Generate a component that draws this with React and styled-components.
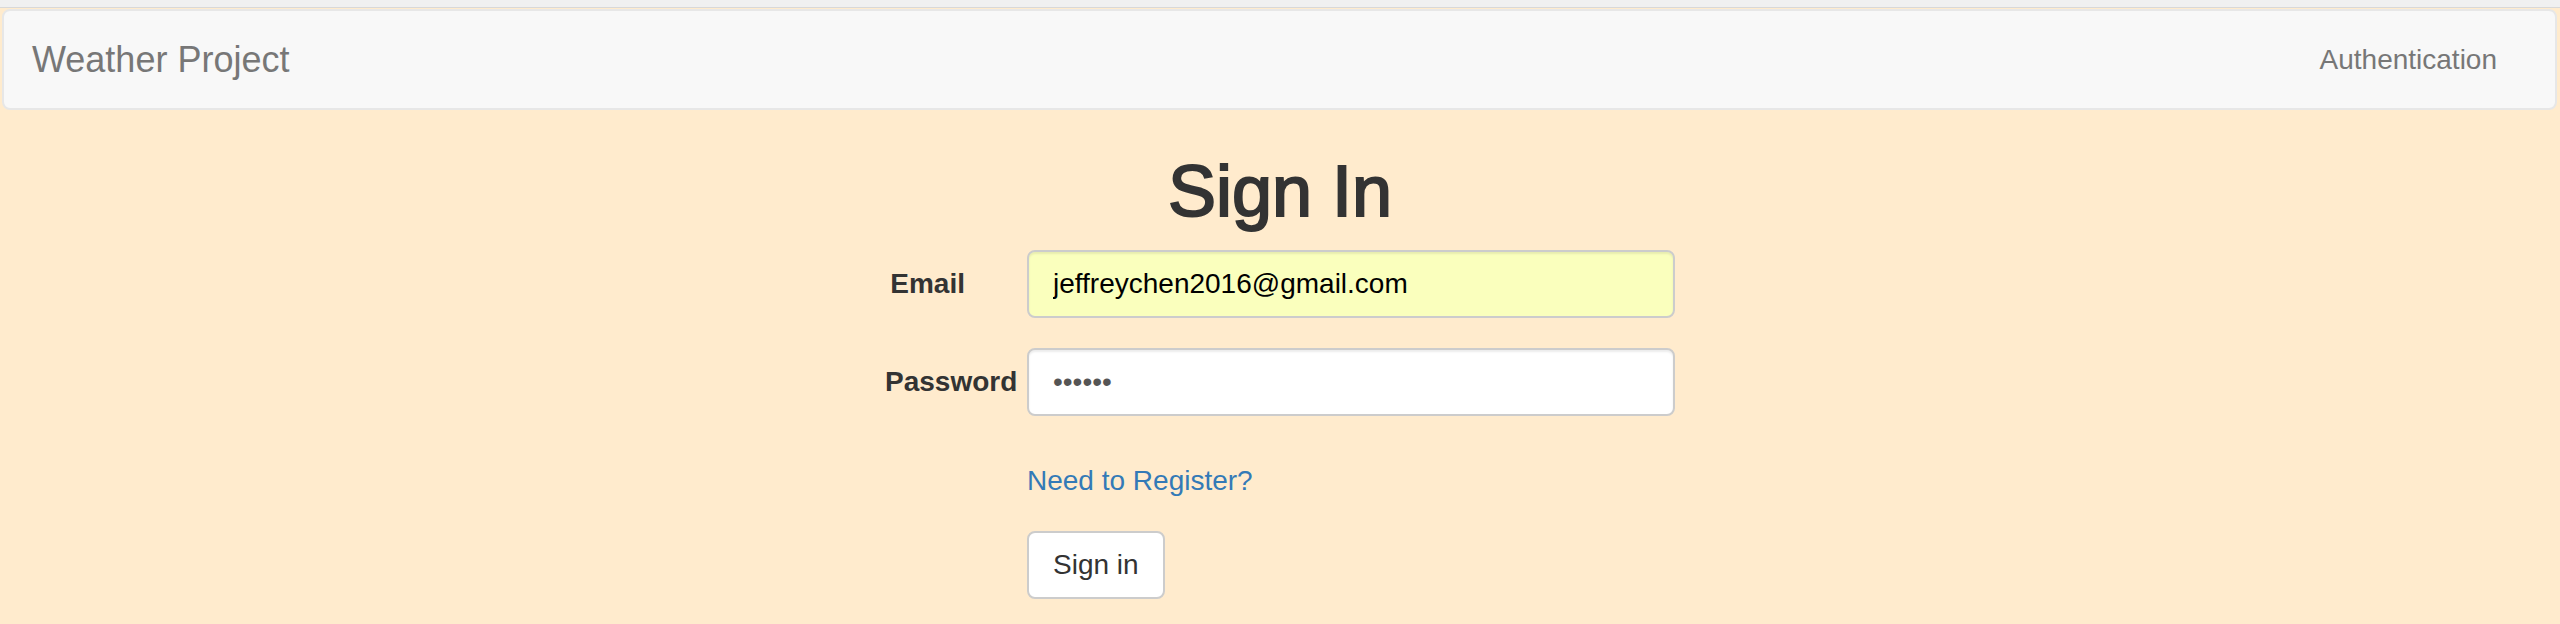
import styled, { createGlobalStyle } from "styled-components";

const GlobalStyle = createGlobalStyle`
  html, body {
    margin: 0;
    padding: 0;
    background-color: #ffebcd;
    font-family: "Liberation Sans", Arial, Helvetica, sans-serif;
    color: #333;
  }
  * {
    box-sizing: border-box;
  }
`;

export default function App() {
  return (
    <>
      <GlobalStyle />
      <TopStrip />
      <Navbar>
        <Brand href="#">Weather Project</Brand>
        <NavLink href="#">Authentication</NavLink>
      </Navbar>

      <Title>Sign In</Title>

      <Form onSubmit={(e) => e.preventDefault()}>
        <Row>
          <Label htmlFor="email">Email</Label>
          <Input id="email" type="email" autofilled defaultValue="jeffreychen2016@gmail.com" />
        </Row>
        <Row>
          <Label htmlFor="password">Password</Label>
          <Input id="password" type="password" defaultValue="123456" />
        </Row>
        <Row gap={45}>
          <span />
          <div>
            <RegisterLink href="#">Need to Register?</RegisterLink>
          </div>
        </Row>
        <Row gap={30}>
          <span />
          <div>
            <Button type="submit">Sign in</Button>
          </div>
        </Row>
      </Form>
    </>
  );
}

const TopStrip = styled.div`
  height: 8px;
  background-color: #f0f0f0;
  border-bottom: 1px solid #d8d8d8;
`;

const Navbar = styled.nav`
  display: flex;
  align-items: center;
  justify-content: space-between;
  height: 101px;
  margin: 1px 3px 0 2px;
  padding: 0 58px 0 28px;
  background-color: #f8f8f8;
  border: 2px solid #e7e7e7;
  border-radius: 8px;
`;

const Brand = styled.a`
  font-size: 36px;
  line-height: 40px;
  color: #777;
  text-decoration: none;
`;

const NavLink = styled.a`
  font-size: 28px;
  line-height: 40px;
  color: #777;
  text-decoration: none;
`;

// Helvetica Neue 500 is heavier than Liberation Sans regular
const Title = styled.h1`
  margin: 42px 0 19px;
  font-size: 72px;
  line-height: 79px;
  font-weight: 500;
  text-align: center;
  color: #333;
  -webkit-text-stroke: 2px #333;
`;

const Form = styled.form`
  width: 790px;
  margin: 0 auto;
`;

const Row = styled.div`
  display: grid;
  grid-template-columns: 80px 648px;
  column-gap: 62px;
  align-items: center;
  margin-top: ${(p) => (p.gap !== undefined ? p.gap : 30)}px;

  &:first-child {
    margin-top: 0;
  }
`;

const Label = styled.label`
  font-size: 28px;
  line-height: 40px;
  font-weight: bold;
  text-align: right;
  white-space: nowrap;
  color: #333;
`;

const Input = styled.input`
  display: block;
  width: 100%;
  height: 68px;
  padding: 12px 24px;
  font-family: inherit;
  font-size: 28px;
  color: ${(p) => (p.autofilled ? "#000" : "#555")};
  background-color: ${(p) => (p.autofilled ? "#faffbd" : "#fff")};
  border: 2px solid #ccc;
  border-radius: 8px;
  box-shadow: inset 0 2px 2px rgba(0, 0, 0, 0.075);
  outline: none;
`;

const RegisterLink = styled.a`
  display: inline-block;
  font-size: 28px;
  line-height: 40px;
  color: #337ab7;
  text-decoration: none;
`;

const Button = styled.button`
  height: 68px;
  padding: 12px 24px;
  font-family: inherit;
  font-size: 28px;
  line-height: 40px;
  color: #333;
  background-color: #fff;
  border: 2px solid #ccc;
  border-radius: 8px;
  cursor: pointer;
`;
